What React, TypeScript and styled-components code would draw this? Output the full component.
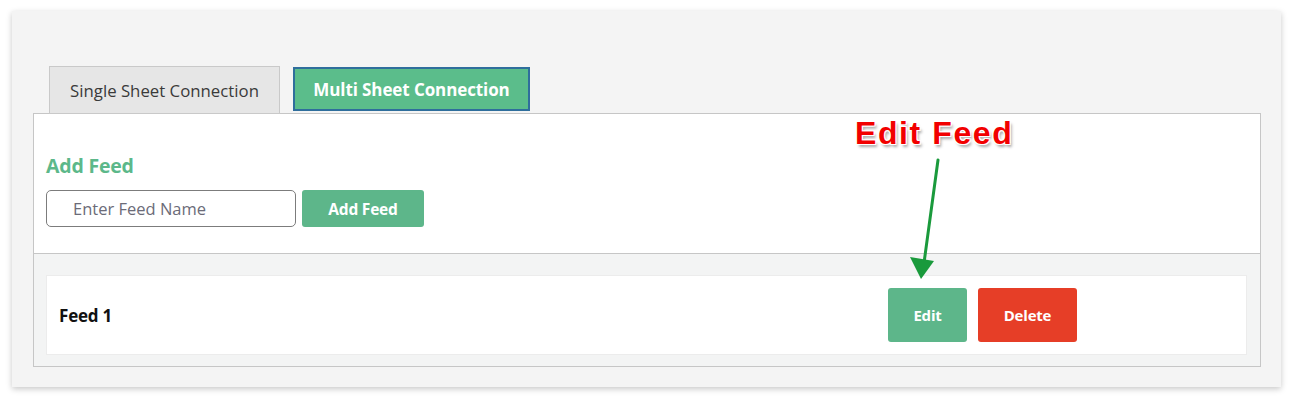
import React from "react";
import styled, { createGlobalStyle } from "styled-components";

const Global = createGlobalStyle`
  html, body { margin: 0; padding: 0; background: #ffffff; }
  body { font-family: "Open Sans", "Noto Sans", sans-serif; }
  * { box-sizing: border-box; }
`;

const Page = styled.div`
  padding: 11px 12px 13px 12px;
  width: 1293px;
`;

const Card = styled.div`
  position: relative;
  background: #f4f4f4;
  box-shadow: 0 2px 6px rgba(0, 0, 0, 0.22);
  padding: 55px 20px 21px 21px;
  height: 376px;
`;

const Tabs = styled.div`
  display: flex;
  align-items: flex-end;
  gap: 13px;
  padding-left: 16px;
  margin-bottom: -1px;
  position: relative;
  z-index: 1;
`;

const Tab = styled.button<{ $active?: boolean }>`
  font-family: "Open Sans", "Noto Sans", sans-serif;
  font-size: ${(p) => (p.$active ? "17px" : "16.8px")};
  font-weight: ${(p) => (p.$active ? 700 : 400)};
  letter-spacing: ${(p) => (p.$active ? "-0.1px" : "0px")};
  color: ${(p) => (p.$active ? "#ffffff" : "#3a3a3a")};
  background: ${(p) => (p.$active ? "#5bbd8b" : "#e6e6e6")};
  border: ${(p) => (p.$active ? "2px solid #2f6e9c" : "1px solid #c9c9c9")};
  width: ${(p) => (p.$active ? "237px" : "231px")};
  height: ${(p) => (p.$active ? "44px" : "48px")};
  margin-bottom: ${(p) => (p.$active ? "3px" : "0")};
  padding: 0;
  display: flex;
  align-items: center;
  justify-content: center;
`;

const Panel = styled.div`
  background: #ffffff;
  border: 1px solid #c6c6c6;
`;

const AddSection = styled.div`
  padding: 38px 13px 24px 12px;
  border-bottom: 1px solid #c6c6c6;
  height: 140px;
`;

const Heading = styled.h3`
  margin: 0 0 10px 0;
  font-family: "Open Sans", "Noto Sans", sans-serif;
  font-size: 19.5px;
  font-weight: 700;
  letter-spacing: -0.2px;
  color: #5cb88a;
  line-height: 28px;
`;

const Form = styled.div`
  display: flex;
  gap: 6px;
`;

const Input = styled.input`
  width: 250px;
  height: 37px;
  border: 1px solid #7c7c7c;
  border-radius: 5px;
  padding: 0 0 0 26px;
  font-family: "Open Sans", "Noto Sans", sans-serif;
  font-size: 16.5px;
  color: #333;
  &::placeholder { color: #6b6b78; }
`;

const Button = styled.button<{ $variant?: "green" | "red"; $w: number; $h: number; $fs: number }>`
  width: ${(p) => p.$w}px;
  height: ${(p) => p.$h}px;
  border: none;
  border-radius: 3px;
  background: ${(p) => (p.$variant === "red" ? "#e63e27" : "#5db68a")};
  color: #ffffff;
  font-family: "Open Sans", "Noto Sans", sans-serif;
  font-size: ${(p) => p.$fs}px;
  font-weight: 700;
  letter-spacing: -0.2px;
  padding: 0;
`;

const ListSection = styled.div`
  background: #f3f4f4;
  padding: 21px 13px 11px 12px;
`;

const FeedRow = styled.div`
  background: #ffffff;
  border: 1px solid #ececec;
  height: 80px;
  display: grid;
  grid-template-columns: 1fr auto;
  align-items: center;
  padding: 0 169px 0 12px;
`;

const FeedName = styled.div`
  font-family: "Open Sans", "Noto Sans", sans-serif;
  font-size: 17px;
  font-weight: 700;
  color: #111;
  letter-spacing: -0.2px;
`;

const Actions = styled.div`
  display: flex;
  gap: 11px;
`;

const Callout = styled.div`
  position: absolute;
  left: 843px;
  top: 104px;
  font-family: "Liberation Sans", Arial, sans-serif;
  font-size: 32px;
  font-weight: 700;
  letter-spacing: 1.6px;
  color: #f20000;
  text-shadow:
    -1px -1px 0 #fff, 1px -1px 0 #fff, -1px 1px 0 #fff, 1px 1px 0 #fff,
    2px 3px 3px rgba(0, 0, 0, 0.35);
`;

const ArrowSvg = styled.svg`
  position: absolute;
  left: 0;
  top: 0;
  pointer-events: none;
`;

export default function App() {
  return (
    <>
      <Global />
      <Page>
        <Card>
          <Tabs>
            <Tab>Single Sheet Connection</Tab>
            <Tab $active>Multi Sheet Connection</Tab>
          </Tabs>
          <Panel>
            <AddSection>
              <Heading>Add Feed</Heading>
              <Form>
                <Input placeholder="Enter Feed Name" />
                <Button $w={122} $h={37} $fs={15.5}>Add Feed</Button>
              </Form>
            </AddSection>
            <ListSection>
              <FeedRow>
                <FeedName>Feed 1</FeedName>
                <Actions>
                  <Button $w={79} $h={54} $fs={15}>Edit</Button>
                  <Button $w={99} $h={54} $fs={15} $variant="red">Delete</Button>
                </Actions>
              </FeedRow>
            </ListSection>
          </Panel>
          <Callout>Edit Feed</Callout>
          <ArrowSvg width="1269" height="376" viewBox="0 0 1269 376">
            <line x1="926" y1="149" x2="912" y2="252" stroke="#1a9a3c" strokeWidth="3" strokeLinecap="round" />
            <polygon points="898,246 922,250 909,268" fill="#1a9a3c" />
          </ArrowSvg>
        </Card>
      </Page>
    </>
  );
}
